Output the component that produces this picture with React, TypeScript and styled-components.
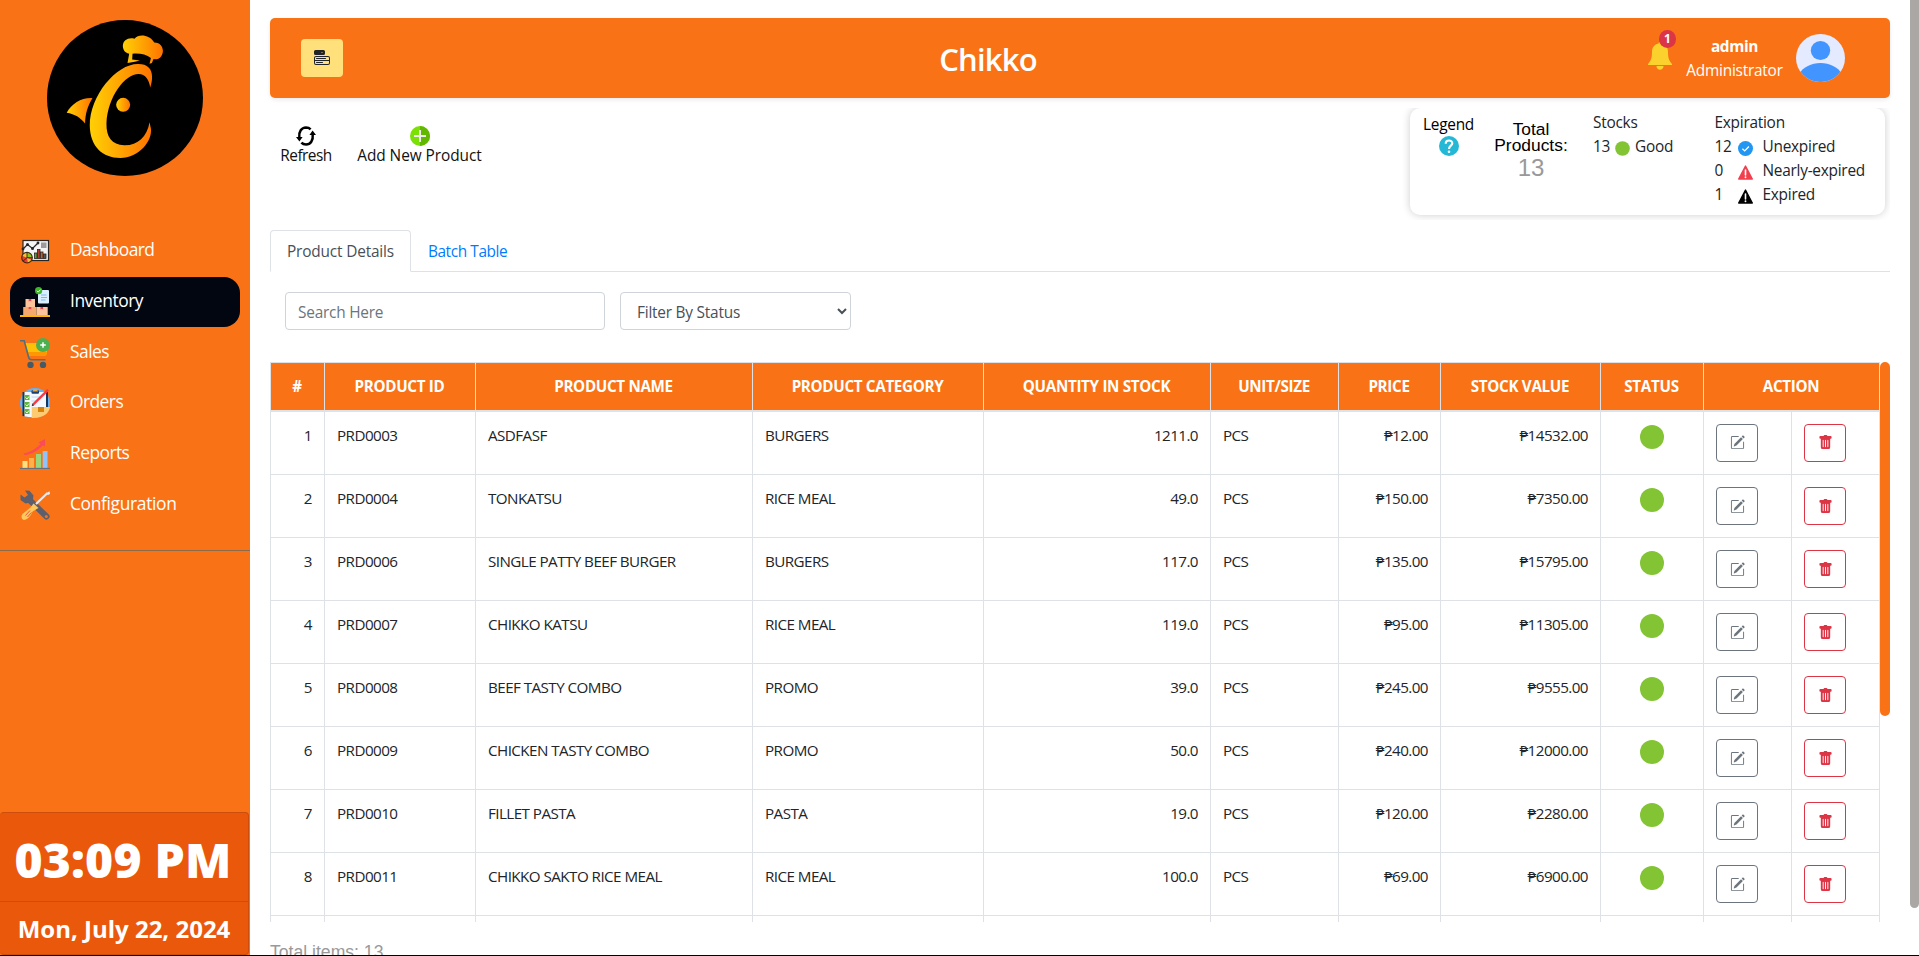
import React from 'react';
import styled, { createGlobalStyle } from 'styled-components';
import { BsMenuButtonFill, BsPencilSquare, BsTrashFill } from 'react-icons/bs';

const GlobalStyle = createGlobalStyle`
  *, *::before, *::after { box-sizing: border-box; }
  body {
    margin: 0;
    background: #fff;
    color: #212529;
    font-family: "Open Sans", "Noto Sans", sans-serif;
    font-size: 15.4px;
    line-height: 24px;
    overflow: hidden;
  }
`;

const Page = styled.div`
  display: flex;
  height: 956px;
  overflow: hidden;
  border-bottom: 1px solid #000;
`;

/* ---------- sidebar ---------- */

const Sidebar = styled.aside`
  display: flex;
  flex-direction: column;
  flex: none;
  width: 250px;
  height: 955px;
  background: #f97316;
  color: #fff;
`;

const LogoBox = styled.div`
  display: flex;
  justify-content: center;
  height: 226px;
  padding-top: 20px;
`;

const Nav = styled.nav`
  display: flex;
  flex-direction: column;
  gap: 0.75px;
  padding: 0 10px 20px;
  border-bottom: 1px solid #8b6b4c;
`;

const NavItem = styled.a<{ $active?: boolean }>`
  display: flex;
  align-items: center;
  gap: 20px;
  height: 50px;
  padding: 0 10px;
  border-radius: 16px;
  background: ${p => (p.$active ? '#020611' : 'transparent')};
`;

const NavLabel = styled.span<{ $tracking: number }>`
  padding-bottom: 4px;
  font-size: 17.4px;
  letter-spacing: ${p => p.$tracking}px;
`;

const Clock = styled.section`
  width: 249px;
  height: 143px;
  margin-top: auto;
  border: 1px solid #cd4d0c;
  border-left: 0;
  border-radius: 4px;
  background: #ea580c;
  font-weight: 700;
  text-align: center;
  white-space: nowrap;
`;

const Time = styled.div`
  height: 89px;
  padding: 14px 2px 0 0;
  border-bottom: 1px solid #cd4d0c;
  font-family: "Noto Sans", sans-serif;
  font-size: 48px;
  font-weight: 900;
  line-height: 66px;
  letter-spacing: 0.2px;
`;

const DateLine = styled.div`
  padding-top: 9px;
  font-size: 24px;
  line-height: 36px;
`;

/* ---------- main column ---------- */

const Main = styled.main`
  display: flex;
  flex-direction: column;
  flex: none;
  width: 1660px;
  height: 955px;
  padding: 18px 20px 0;
  overflow: hidden;
`;

const PageScroll = styled.div`
  flex: none;
  width: 9px;
  height: 908px;
  border-radius: 0 0 5px 5px;
  background: #aba7a4;
`;

const Header = styled.header`
  display: flex;
  align-items: center;
  flex: none;
  height: 80px;
  padding: 0 45px 0 31px;
  border-radius: 5px;
  background: #f97316;
  box-shadow: 0 2px 4px rgba(0, 0, 0, 0.08);
  color: #fff;
`;

const MenuButton = styled.button`
  display: flex;
  align-items: center;
  justify-content: center;
  width: 42px;
  height: 38px;
  padding: 0;
  border: 0;
  border-radius: 4px;
  background: #ffe07a;
  color: #212529;
`;

const Title = styled.h1`
  flex: 1;
  margin: 0;
  padding: 2px 15px 0 0;
  font-size: 31px;
  font-weight: 600;
  line-height: 38px;
  letter-spacing: -0.8px;
  text-align: center;
`;

const BellBox = styled.div`
  position: relative;
  width: 28px;
  height: 38px;
  margin-right: 10px;
`;

const Bell = styled.svg`
  display: block;
  margin-top: 3px;
`;

const Badge = styled.span`
  position: absolute;
  left: 11px;
  top: -9px;
  width: 17px;
  height: 18px;
  border-radius: 9px;
  background: #dc3545;
  font-size: 12px;
  font-weight: 700;
  line-height: 18px;
  text-align: center;
`;

const User = styled.div`
  display: flex;
  flex-direction: column;
  width: 97px;
  margin-right: 13px;
  padding-top: 2px;
  text-align: center;
  letter-spacing: -0.22px;
`;

const UserName = styled.strong`
  letter-spacing: -0.35px;
`;

const Avatar = styled.svg`
  display: block;
`;

/* ---------- toolbar and legend ---------- */

const TopRow = styled.div`
  display: flex;
  justify-content: space-between;
  flex: none;
  height: 112px;
  margin-top: 10px;
  overflow: hidden;
`;

const Tools = styled.div`
  display: flex;
  gap: 25px;
  padding: 18px 0 0 10px;
  color: #111;
`;

const Tool = styled.div<{ $width: number; $tracking: number }>`
  display: flex;
  flex-direction: column;
  align-items: center;
  width: ${p => p.$width}px;
  line-height: 19px;
  white-space: nowrap;
  letter-spacing: ${p => p.$tracking}px;
`;

const LegendCard = styled.section`
  display: flex;
  width: 475px;
  height: 107px;
  margin-right: 5px;
  padding-left: 12px;
  border-radius: 10px;
  background: #fff;
  box-shadow: 0 0 8px rgba(0, 0, 0, 0.2);
  line-height: 24px;
  letter-spacing: -0.25px;
`;

const LegendHelp = styled.div`
  display: flex;
  flex-direction: column;
  align-items: center;
  width: 53px;
  padding-top: 5px;
  color: #000;

  svg { margin-top: -1px; }
`;

const Totals = styled.div`
  width: 80px;
  margin-left: 16px;
  padding-top: 13px;
  color: #000;
  font-family: "Liberation Sans", sans-serif;
  font-size: 17.4px;
  line-height: 16px;
  letter-spacing: 0;
  text-align: center;
`;

const TotalCount = styled.div`
  padding-top: 2px;
  color: #999;
  font-size: 24px;
  line-height: 26px;
`;

const StockColumn = styled.div`
  width: 121.5px;
  margin-left: 22px;
  padding-top: 3px;
`;

const ExpiryColumn = styled.div`
  padding-top: 3px;
`;

const StockLine = styled.div`
  display: flex;
  align-items: center;
  gap: 5px;

  svg { margin-top: 2px; }
`;

const ExpiryLine = styled.div`
  display: grid;
  grid-template-columns: 23px 15px auto;
  align-items: center;

  svg { margin-top: 3px; }
  span:last-child { padding-left: 10px; }
`;

/* ---------- tabs and filters ---------- */

const Tabs = styled.div`
  display: flex;
  flex: none;
  height: 42px;
  margin-top: 10px;
  border-bottom: 1px solid #dee2e6;
`;

const Tab = styled.a<{ $active?: boolean }>`
  height: 42px;
  padding: 9px 16px 7px;
  border: 1px solid ${p => (p.$active ? '#dee2e6' : 'transparent')};
  border-bottom-color: ${p => (p.$active ? '#fff' : '#dee2e6')};
  border-radius: 4px 4px 0 0;
  color: ${p => (p.$active ? '#495057' : '#007bff')};
  letter-spacing: ${p => (p.$active ? -0.17 : -0.4)}px;
`;

const Filters = styled.div`
  display: flex;
  gap: 15px;
  flex: none;
  padding: 20px 15px 32px;
`;

const SearchInput = styled.input`
  width: 320px;
  height: 38px;
  padding: 8px 12px 6px;
  border: 1px solid #ced4da;
  border-radius: 4px;
  font: inherit;
  letter-spacing: -0.22px;

  &::placeholder { color: #6c757d; }
`;

const StatusSelect = styled.select`
  width: 231px;
  height: 38px;
  padding: 8px 6px 6px 12px;
  border: 1px solid #ced4da;
  border-radius: 4px;
  background: #fff;
  color: #495057;
  font: inherit;
  letter-spacing: -0.22px;
`;

/* ---------- table ---------- */

const TableArea = styled.div`
  display: flex;
  justify-content: space-between;
  flex: none;
  height: 560px;
  overflow: hidden;
`;

const Table = styled.table`
  flex: none;
  width: 1609px;
  height: 1px;
  border-collapse: collapse;
  table-layout: fixed;
  font-size: 15.2px;

  tbody tr:first-child td { height: 64px; }
`;

const HeadCell = styled.th`
  height: 48px;
  padding: 0 1px 1px 0;
  border: 1px solid #dee2e6;
  border-bottom-width: 2px;
  background: #f97316;
  color: #fff;
  font-size: 15.2px;
  font-weight: 700;
  letter-spacing: -0.32px;
  text-align: center;
  white-space: nowrap;
`;

const Cell = styled.td<{ $align?: 'right' }>`
  height: 63px;
  padding: 11px 12px 0;
  border: 1px solid #dee2e6;
  vertical-align: top;
  text-align: ${p => p.$align ?? 'left'};
  letter-spacing: -0.55px;
  white-space: nowrap;
`;

const StatusDot = styled.span`
  display: block;
  width: 24px;
  height: 24px;
  margin: 2px auto 0;
  border-radius: 50%;
  background: #82c434;
`;

const ActionButton = styled.button<{ $color: string }>`
  display: flex;
  align-items: center;
  justify-content: center;
  width: 42px;
  height: 38px;
  margin-top: 1px;
  padding: 0;
  border: 1px solid ${p => p.$color};
  border-radius: 4px;
  background: #fff;
  color: ${p => p.$color};
`;

const TableScroll = styled.div`
  flex: none;
  width: 10px;
  height: 354px;
  border-radius: 5px;
  background: #f97316;
`;

const ItemCount = styled.p`
  margin: 17px 0 0;
  color: #999;
  font-family: "Liberation Sans", sans-serif;
  font-size: 17.6px;
  line-height: 26px;
`;

/* ---------- drawings ---------- */

const Logo = () => (
  <svg width="156" height="156" viewBox="141 60 467 467">
    <defs>
      {[['c', 270, 456], ['hat', 368, 488], ['fin', 200, 277], ['eye', 348, 390]].map(([id, a, b]) => (
        <linearGradient key={id} id={`logo-${id}`} gradientUnits="userSpaceOnUse" x1={a} x2={b} y1="0" y2="0">
          <stop offset="0.05" stopColor="#ffcc05" />
          <stop offset="1" stopColor="#ff7300" />
        </linearGradient>
      ))}
    </defs>
    <circle cx="374.500" cy="293.500" r="233.500" />
    <path fill="url(#logo-hat)" d="M382 189L387 161C373 158 368 147 368 137C369 120 385 111 403 116C416 101 447 104 462 127C480 127 488 140 488 153C487 170 475 181 460 177L455 189L448 191L452 174C438 163 418 159 397 161L396 178L419 181L404 185Z" />
    <path fill="url(#logo-c)" d="M450 262C457 242 459 216 446 203C438 195 428 192 415 192C350 190 269 286 269 376C270 440 308 473 360 473C418 473 457 421 452 385L448 366C440 410 412 436 372 435C335 434 318 410 319 370C322 290 375 222 415 222C436 222 447 240 450 262Z" />
    <path fill="url(#logo-fin)" d="M200 338C215 310 245 292 277 294C262 318 256 340 255 370C240 352 225 342 200 338Z" />
    <circle cx="369" cy="314" r="21" fill="url(#logo-eye)" />
  </svg>
);

const NavSvg = styled.svg.attrs({ width: 30, height: 30, viewBox: '0 0 30 30' })`
  flex: none;
`;

const DashboardIcon = () => (
  <NavSvg>
    <rect x="3" y="4.500" width="25.500" height="20" fill="#f4f4f4" stroke="#262626" strokeWidth="1.200" />
    <rect x="21" y="6.500" width="5.500" height="5.500" fill="#9b9b9b" />
    <path d="M3 13L7.500 8.500L12.500 12.500L18 7" fill="none" stroke="#262626" strokeWidth="1.300" />
    <g fill="#262626"><circle cx="3" cy="13" r="1.400" /><circle cx="7.500" cy="8.500" r="1.500" /><circle cx="12.500" cy="12.500" r="1.500" /><circle cx="18" cy="7" r="1.400" /></g>
    <g stroke="#262626" strokeWidth="0.800"><rect x="14.500" y="17" width="2.500" height="5.500" fill="#5aa51e" /><rect x="17.500" y="13.500" width="2.500" height="9" fill="#b23a2e" /><rect x="20.500" y="16" width="2.500" height="6.500" fill="#c85e22" /><rect x="23.500" y="18" width="2.500" height="4.500" fill="#555" /></g>
    <circle cx="7" cy="21.700" r="5.300" fill="#ed3b2b" />
    <path d="M7 21.700V16.400A5.300 5.300 0 0 1 12.300 21.700Z" fill="#8bc720" />
    <path d="M7 21.700L2 19.800A5.300 5.300 0 0 1 7 16.400ZM7 21.700L11.800 24A5.300 5.300 0 0 1 8 27Z" fill="#fbc02d" />
    <path d="M7 16.400V21.700H12.300M7 21.700L3 25.200" fill="none" stroke="#262626" strokeWidth="0.900" />
    <circle cx="7" cy="21.700" r="5.300" fill="none" stroke="#3a2a10" strokeWidth="1.100" />
  </NavSvg>
);

const InventoryIcon = () => (
  <NavSvg>
    <rect x="18" y="3" width="11" height="13.500" rx="1" fill="#dcefff" />
    <path d="M21 8H26.500M21 10.500H27M21 13H25.500" stroke="#6fb1ef" strokeWidth="0.900" />
    <circle cx="18.600" cy="3.700" r="3.600" fill="#3fb62a" />
    <path d="M16.900 3.800L18.200 5.100L20.500 2.600" fill="none" stroke="#fff" strokeWidth="1" />
    <rect x="5.500" y="12" width="9.500" height="8" fill="#fbc49c" />
    <rect x="3.200" y="20" width="13.500" height="8" fill="#f6a96e" />
    <rect x="16.700" y="20" width="11" height="8" fill="#fbc49c" />
    <path d="M8.700 12H11.300V14.500L10 13.700L8.700 14.500ZM8.700 20H11.300V22.500L10 21.700L8.700 22.500ZM20.500 20H23.100V22.500L21.800 21.700L20.500 22.500Z" fill="#ef3d53" />
    <rect y="28" width="30" height="2" fill="#fdb90b" />
  </NavSvg>
);

const SalesIcon = () => (
  <NavSvg>
    <path d="M5 5H28L26.500 16C26.300 17 25.700 17.500 24.700 17.500H9Z" fill="#ffc107" />
    <path d="M7.600 14H27L26.500 16.500C26.300 17.300 25.700 17.700 24.700 17.700H8.700Z" fill="#ff9800" />
    <path d="M0 2.700H4.200L8.700 19.500C9.100 21 10 21.700 11.500 21.700H25.500" fill="none" stroke="#546e7a" strokeWidth="1.600" />
    <circle cx="10.500" cy="27" r="3.200" fill="#455a64" /><circle cx="23" cy="27" r="3.200" fill="#455a64" />
    <circle cx="23" cy="7" r="7" fill="#4caf50" />
    <path d="M23 4.200V9.800M20.200 7H25.800" stroke="#fff" strokeWidth="1.500" />
  </NavSvg>
);

const OrdersIcon = () => (
  <NavSvg>
    <circle cx="15" cy="15" r="15" fill="#64b1fa" />
    <path d="M2.500 4H28V23H14L12 29.500L2.500 28Z" fill="#17345c" />
    <path d="M4.500 4H26V19.500H12.500V29.500L4.500 28.500Z" fill="#f4f9ff" />
    <path d="M11.700 19H30C29 25.500 23 30.500 11.700 29.900Z" fill="#fdcb72" />
    <rect x="18" y="19" width="6" height="5" fill="#d98008" />
    <rect x="11.500" y="2.300" width="7.500" height="3.500" rx="1" fill="#1c3f70" />
    <path d="M12.500 3.500A2.800 2.800 0 0 1 18 3.500" fill="#f2a93a" />
    <path d="M11.500 9H20M11.500 13H17M11.500 16H14" stroke="#b8d4ee" strokeWidth="0.900" />
    <g fill="#60b63a"><rect x="4.500" y="7" width="5" height="5" /><rect x="4.500" y="14" width="5" height="5" /><rect x="4.500" y="21" width="5" height="5" /></g>
    <path d="M5.500 9.500L7 11L9 8.500M5.500 16.500L7 18L9 15.500M5.500 23.500L7 25L9 22.500" fill="none" stroke="#e7ffe0" strokeWidth="1" />
    <path d="M12.800 16.800L28 1.800" stroke="#f23b46" strokeWidth="2.400" />
    <path d="M11.700 18.200L12.300 15.800L14 17.500Z" fill="#333" />
  </NavSvg>
);

const ReportsIcon = () => (
  <NavSvg>
    <rect x="2.500" y="22" width="5" height="7" fill="#ffe07d" />
    <rect x="9" y="19" width="5" height="10" fill="#ffb24c" />
    <rect x="16" y="15" width="5" height="14" fill="#9bd67c" />
    <rect x="22.700" y="12" width="4.800" height="17" fill="#8fc3fa" />
    <path d="M0 29.400H30" stroke="#5c7085" strokeWidth="1.100" />
    <path d="M3.500 14.600C10 13.500 16 9.800 20.500 5L18.500 3.500L25 0V7.500L22.800 6.300C18 12 11 15.500 4.800 16.200Z" fill="#fb4a59" />
  </NavSvg>
);

const ConfigIcon = () => (
  <NavSvg>
    <path d="M9 9.500L26.500 26.500" stroke="#5d5f6d" strokeWidth="6" strokeLinecap="round" />
    <path d="M5 0.500L9.500 0.800L13.500 5.500L12.500 12L5.500 13.500L0.500 10V4.500L4.500 7.500L8 5Z" fill="#5d5f6d" />
    <circle cx="26.300" cy="26.500" r="1.500" fill="#f97316" />
    <path d="M16 14L27.500 3" stroke="#e8eaf0" strokeWidth="2.200" />
    <path d="M26 3.500L29.500 1.200L30 4L28 5Z" fill="#e8eaf0" />
    <path d="M13.500 13.500L18.500 18L12.500 21.500C11 26 7 30 4 30C1 29 1 26 2.500 24L10.500 17.500Z" fill="#fcc75c" />
    <path d="M5.500 25.500L10 20.500M7.500 27L11.500 22.500" stroke="#ef5350" strokeWidth="1" />
  </NavSvg>
);

const RefreshIcon = () => (
  <svg width="20" height="20" viewBox="0 0 20 20">
    <path d="M3.300 11.500C2.600 5.500 5.500 1.600 10 1.500C12 1.500 13.500 2.200 14.600 3.400" fill="none" stroke="#000" strokeWidth="2.500" />
    <path d="M16.700 8.500C17.400 14.500 14.500 18.400 10 18.500C8 18.500 6.500 17.800 5.400 16.600" fill="none" stroke="#000" strokeWidth="2.500" />
    <path d="M0 11H6.600L3.400 15.500ZM20 9H13.400L16.600 4.500Z" />
  </svg>
);

const AddIcon = () => (
  <svg width="20" height="20" viewBox="0 0 20 20">
    <circle cx="10" cy="10" r="10" fill="#7be005" />
    <path d="M10 0A10 10 0 0 1 10 20Z" fill="#62b801" />
    <path d="M4 10H16M10 4V16" stroke="#eee" strokeWidth="2" />
  </svg>
);

const HelpIcon = () => (
  <svg width="20" height="20" viewBox="0 0 20 20">
    <circle cx="10" cy="10" r="10" fill="#25b8d6" />
    <path d="M6.700 7.700C6.700 3.400 13.400 3.500 13.300 7.400C13.200 9.700 10 9.700 10 13" fill="none" stroke="#fff" strokeWidth="2.100" />
    <circle cx="10" cy="15.800" r="1.300" fill="#fff" />
  </svg>
);

const GoodIcon = () => (
  <svg width="15" height="15" viewBox="0 0 15 15"><circle cx="7.500" cy="7.500" r="7.300" fill="#82c434" /></svg>
);

const CheckIcon = () => (
  <svg width="15" height="15" viewBox="0 0 15 15">
    <circle cx="7.500" cy="7.500" r="7.500" fill="#2196f3" />
    <path d="M4.400 7.700L6.700 9.900L10.900 5.500" fill="none" stroke="#fff" strokeWidth="1.300" />
  </svg>
);

const WarningIcon = ({ color }: { color: string }) => (
  <svg width="15" height="15" viewBox="0 0 15 15">
    <path d="M7.500 1L14.300 14H0.700Z" fill={color} stroke={color} strokeWidth="1.400" strokeLinejoin="round" />
    <path d="M7.500 5V10" stroke="#fff" strokeWidth="1.600" strokeLinecap="round" />
    <circle cx="7.500" cy="12.300" r="0.950" fill="#fff" />
  </svg>
);

/* ---------- data ---------- */

const navItems = [
  { label: 'Dashboard', icon: <DashboardIcon />, tracking: -0.6 },
  { label: 'Inventory', icon: <InventoryIcon />, tracking: -0.45, active: true },
  { label: 'Sales', icon: <SalesIcon />, tracking: -0.5 },
  { label: 'Orders', icon: <OrdersIcon />, tracking: -0.55 },
  { label: 'Reports', icon: <ReportsIcon />, tracking: -0.55 },
  { label: 'Configuration', icon: <ConfigIcon />, tracking: -0.34 },
];

const columns = [
  { title: '#', width: [54] },
  { title: 'PRODUCT ID', width: [151] },
  { title: 'PRODUCT NAME', width: [277] },
  { title: 'PRODUCT CATEGORY', width: [231] },
  { title: 'QUANTITY IN STOCK', width: [227] },
  { title: 'UNIT/SIZE', width: [128] },
  { title: 'PRICE', width: [102] },
  { title: 'STOCK VALUE', width: [160] },
  { title: 'STATUS', width: [103] },
  { title: 'ACTION', width: [88, 88] },
];

const products = [
  ['PRD0003', 'ASDFASF', 'BURGERS', '1211.0', '12.00', '14532.00'],
  ['PRD0004', 'TONKATSU', 'RICE MEAL', '49.0', '150.00', '7350.00'],
  ['PRD0006', 'SINGLE PATTY BEEF BURGER', 'BURGERS', '117.0', '135.00', '15795.00'],
  ['PRD0007', 'CHIKKO KATSU', 'RICE MEAL', '119.0', '95.00', '11305.00'],
  ['PRD0008', 'BEEF TASTY COMBO', 'PROMO', '39.0', '245.00', '9555.00'],
  ['PRD0009', 'CHICKEN TASTY COMBO', 'PROMO', '50.0', '240.00', '12000.00'],
  ['PRD0010', 'FILLET PASTA', 'PASTA', '19.0', '120.00', '2280.00'],
  ['PRD0011', 'CHIKKO SAKTO RICE MEAL', 'RICE MEAL', '100.0', '69.00', '6900.00'],
];

const ProductRow = ({ index, product }: { index: number; product: string[] }) => {
  const [id, name, category, quantity, price, value] = product;
  return (
    <tr>
      <Cell $align="right">{index}</Cell>
      <Cell>{id}</Cell>
      <Cell>{name}</Cell>
      <Cell>{category}</Cell>
      <Cell $align="right">{quantity}</Cell>
      <Cell>PCS</Cell>
      <Cell $align="right">₱{price}</Cell>
      <Cell $align="right">₱{value}</Cell>
      <Cell><StatusDot /></Cell>
      <Cell><ActionButton $color="#6c757d"><BsPencilSquare size={15} /></ActionButton></Cell>
      <Cell><ActionButton $color="#dc3545"><BsTrashFill size={15} /></ActionButton></Cell>
    </tr>
  );
};

export default function App() {
  return (
    <Page>
      <GlobalStyle />
      <Sidebar>
        <LogoBox><Logo /></LogoBox>
        <Nav>
          {navItems.map(item => (
            <NavItem key={item.label} $active={item.active}>
              {item.icon}
              <NavLabel $tracking={item.tracking}>{item.label}</NavLabel>
            </NavItem>
          ))}
        </Nav>
        <Clock>
          <Time>03:09 PM</Time>
          <DateLine>Mon, July 22, 2024</DateLine>
        </Clock>
      </Sidebar>

      <Main>
        <Header>
          <MenuButton><BsMenuButtonFill size={16} /></MenuButton>
          <Title>Chikko</Title>
          <BellBox>
            <Bell width="24" height="28" viewBox="0 0 24 28">
              <path d="M12 0C12.800 0 13.500 0.700 13.500 1.600C17.800 2.500 20 5.600 20 10C20 16 21 18.500 24 22V23H0V22C3 18.500 4 16 4 10C4 5.600 6.200 2.500 10.500 1.600C10.500 0.700 11.200 0 12 0ZM8.500 24H15.500C15.500 29 8.500 29 8.500 24Z" fill="#fbd12e" />
            </Bell>
            <Badge>1</Badge>
          </BellBox>
          <User>
            <UserName>admin</UserName>
            <span>Administrator</span>
          </User>
          <Avatar width="49" height="48" viewBox="0 0 48 48" preserveAspectRatio="none">
            <defs><clipPath id="avatar"><circle cx="24" cy="24" r="24" /></clipPath></defs>
            <g clipPath="url(#avatar)">
              <rect width="48" height="48" fill="#e4eaff" />
              <circle cx="24" cy="16.500" r="9.500" fill="#4294ff" />
              <path d="M3 40C7 33 15 29 24 29C33 29 41 33 45 40V48H3Z" fill="#4294ff" />
            </g>
          </Avatar>
        </Header>

        <TopRow>
          <Tools>
            <Tool $width={52} $tracking={-0.5}><RefreshIcon />Refresh</Tool>
            <Tool $width={125} $tracking={-0.05}><AddIcon />Add New Product</Tool>
          </Tools>
          <LegendCard>
            <LegendHelp>Legend<HelpIcon /></LegendHelp>
            <Totals>
              Total<br />Products:
              <TotalCount>13</TotalCount>
            </Totals>
            <StockColumn>
              Stocks
              <StockLine><span>13</span><GoodIcon /><span>Good</span></StockLine>
            </StockColumn>
            <ExpiryColumn>
              Expiration
              <ExpiryLine><span>12</span><CheckIcon /><span>Unexpired</span></ExpiryLine>
              <ExpiryLine><span>0</span><WarningIcon color="#f23f4d" /><span>Nearly-expired</span></ExpiryLine>
              <ExpiryLine><span>1</span><WarningIcon color="#000" /><span>Expired</span></ExpiryLine>
            </ExpiryColumn>
          </LegendCard>
        </TopRow>

        <Tabs>
          <Tab $active>Product Details</Tab>
          <Tab>Batch Table</Tab>
        </Tabs>

        <Filters>
          <SearchInput placeholder="Search Here" />
          <StatusSelect><option>Filter By Status</option></StatusSelect>
        </Filters>

        <TableArea>
          <Table>
            <colgroup>
              {columns.flatMap(c => c.width.map((w, i) => <col key={c.title + i} width={w} />))}
            </colgroup>
            <thead>
              <tr>
                {columns.map(c => <HeadCell key={c.title} colSpan={c.width.length}>{c.title}</HeadCell>)}
              </tr>
            </thead>
            <tbody>
              {products.map((p, i) => <ProductRow key={p[0]} index={i + 1} product={p} />)}
              <tr>{Array.from({ length: 11 }, (_, i) => <Cell key={i} />)}</tr>
            </tbody>
          </Table>
          <TableScroll />
        </TableArea>

        <ItemCount>Total items: 13</ItemCount>
      </Main>
      <PageScroll />
    </Page>
  );
}
